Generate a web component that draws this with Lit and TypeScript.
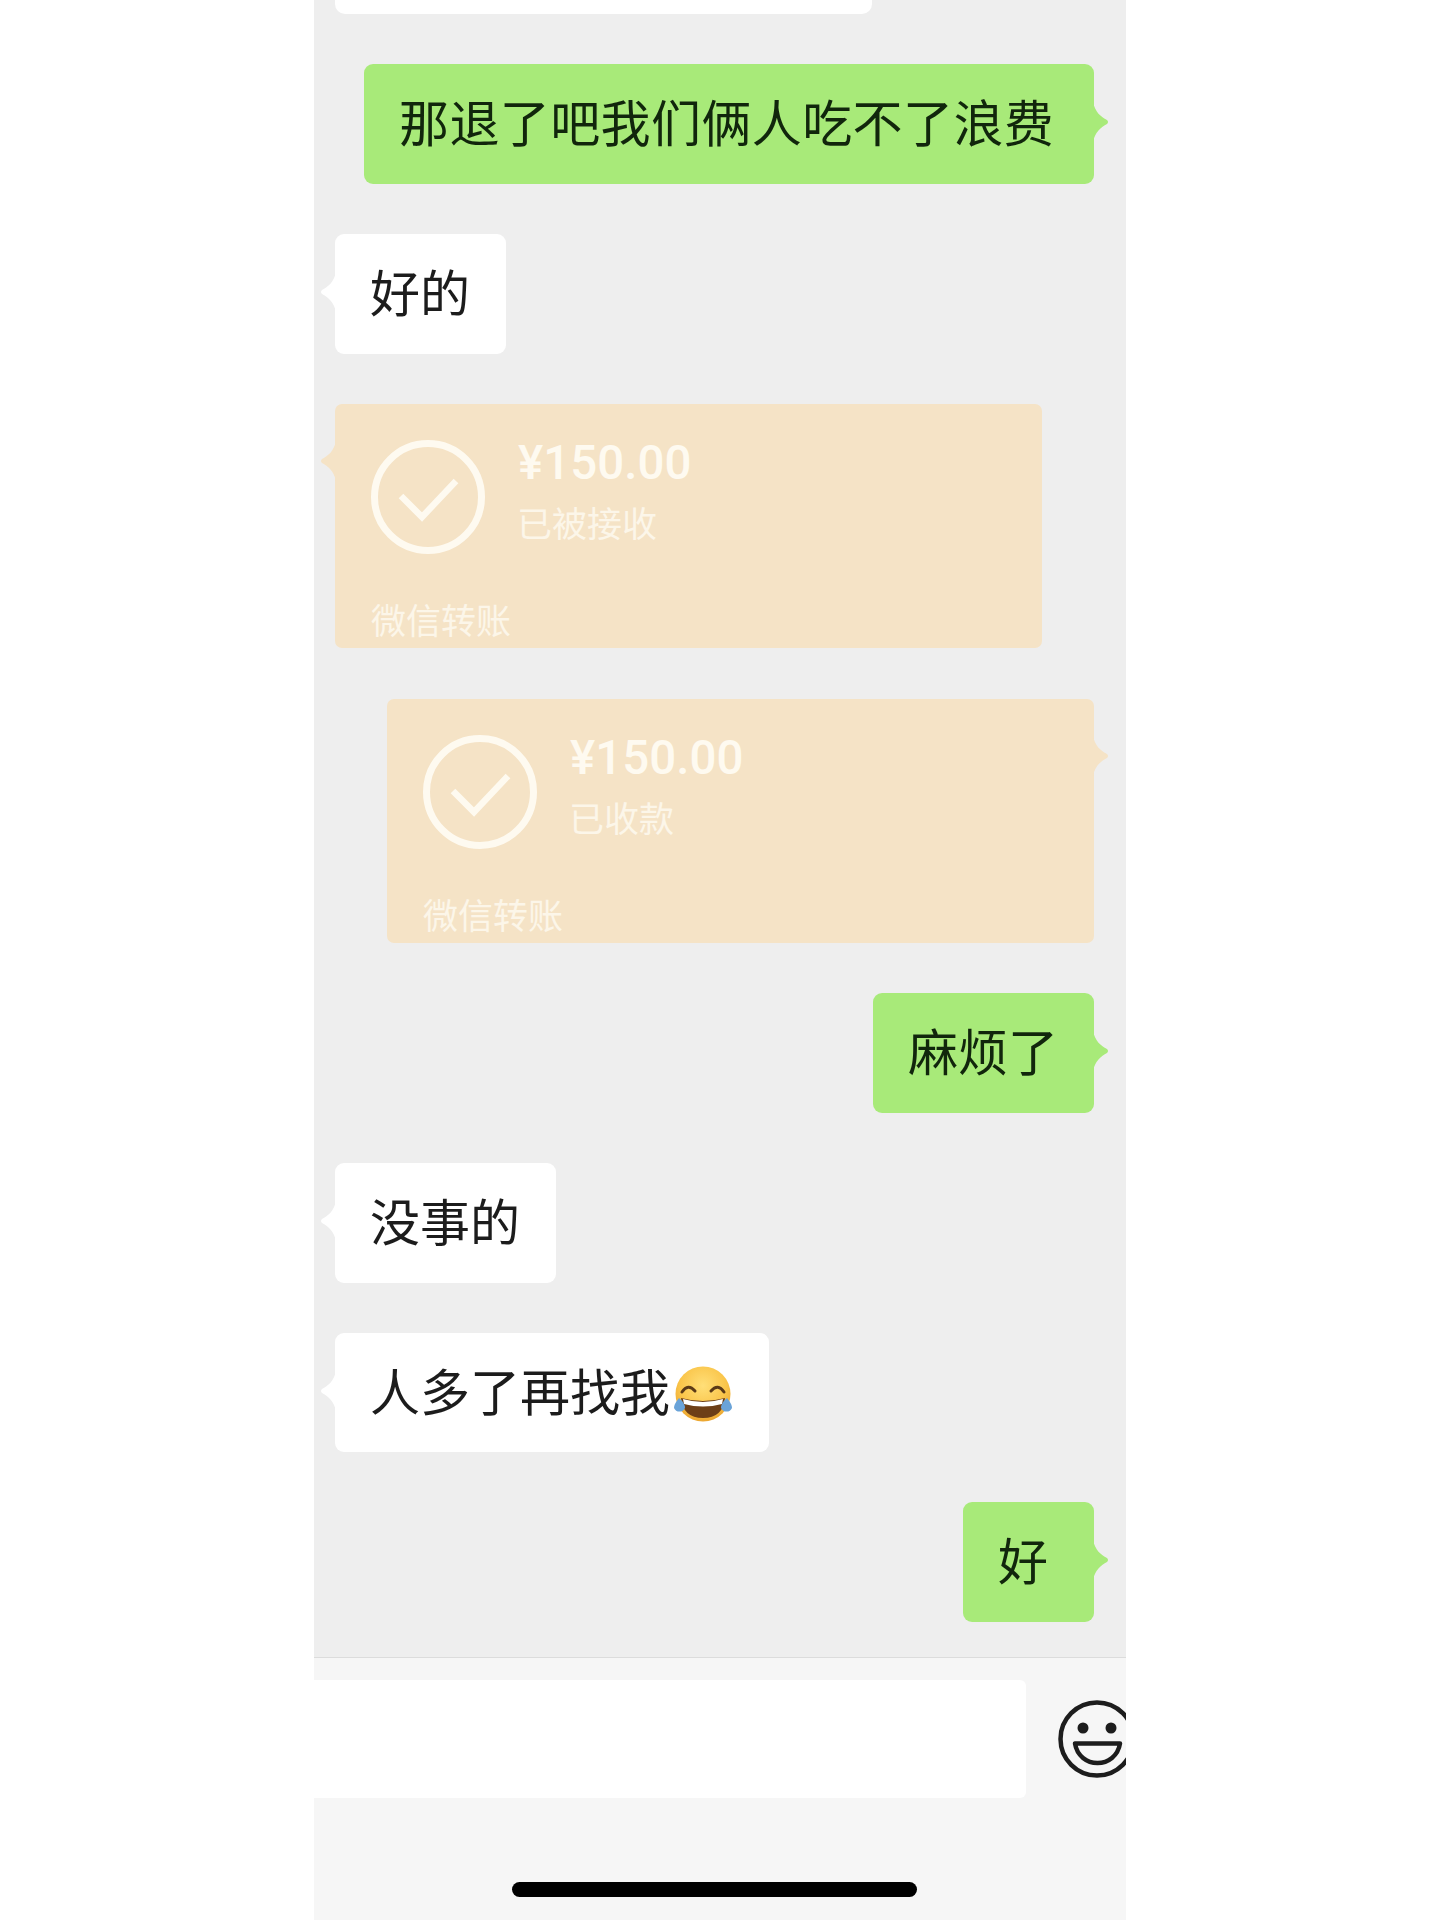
import { LitElement, html, css, svg } from "lit";
import { customElement } from "lit/decorators.js";

type Msg =
  | { kind: "text"; side: "in" | "out"; text: string; wide?: string; emoji?: boolean }
  | { kind: "card"; side: "in" | "out"; status: string };

const MESSAGES: Msg[] = [
  { kind: "text", side: "out", text: "那退了吧我们俩人吃不了浪费", wide: "w730" },
  { kind: "text", side: "in", text: "好的" },
  { kind: "card", side: "in", status: "已被接收" },
  { kind: "card", side: "out", status: "已收款" },
  { kind: "text", side: "out", text: "麻烦了" },
  { kind: "text", side: "in", text: "没事的" },
  { kind: "text", side: "in", text: "人多了再找我", emoji: true },
  { kind: "text", side: "out", text: "好", wide: "w131" },
];

const laughEmoji = svg`
  <defs>
    <radialGradient id="face" cx="50%" cy="35%" r="70%">
      <stop offset="0%" stop-color="#ffdf78" />
      <stop offset="60%" stop-color="#fac54a" />
      <stop offset="100%" stop-color="#e89f2a" />
    </radialGradient>
  </defs>
  <circle cx="30" cy="28" r="27.5" fill="url(#face)" />
  <path d="M9 26 Q15 17 22 25" fill="none" stroke="#5b3a17" stroke-width="3" stroke-linecap="round" />
  <path d="M38 25 Q45 17 51 26" fill="none" stroke="#5b3a17" stroke-width="3" stroke-linecap="round" />
  <path d="M8 32 Q30 38 52 32 Q50 52 30 52 Q10 52 8 32 Z" fill="#6d3f17" />
  <path d="M10 33 Q30 39 50 33 L49 38 Q30 43 11 38 Z" fill="#fff" />
  <path d="M6 32 Q1 38 1 42 A6 6 0 0 0 12 42 Q12 37 6 32 Z" fill="#6aa3d8" />
  <path d="M54 32 Q59 38 59 42 A6 6 0 0 1 48 42 Q48 37 54 32 Z" fill="#6aa3d8" />
`;

@customElement("app-root")
export class AppRoot extends LitElement {
  static styles = css`
    :host {
      display: block;
      width: 1440px;
      height: 1920px;
      background: #fff;
      font-family: "Noto Sans CJK SC", "Liberation Sans", sans-serif;
    }
    .phone {
      width: 812px;
      height: 1920px;
      margin: 0 auto;
      display: flex;
      flex-direction: column;
      overflow: hidden;
      background: #eeeeee;
    }
    .chat {
      height: 1657px;
      flex: none;
      padding: 0 32px 0 21px;
      box-sizing: border-box;
      display: flex;
      flex-direction: column;
      gap: 50px;
    }
    .stub {
      width: 537px;
      height: 14px;
      flex: none;
      background: #fff;
      border-radius: 0 0 10px 10px;
    }
    .bubble {
      position: relative;
      flex: none;
      height: 120px;
      box-sizing: border-box;
      padding: 0 36px 8px 35px;
      border-radius: 9px;
      font-size: 50px;
      line-height: 70px;
      white-space: nowrap;
      display: flex;
      align-items: center;
    }
    .w730 { width: 730px; letter-spacing: 0.4px; }
    .w131 { width: 131px; }
    .has-emoji { height: 119px; }
    .in { align-self: flex-start; }
    .out { align-self: flex-end; }
    .bubble.in { background: #fff; color: #1c1c1c; }
    .bubble.out { background: #a8ea79; color: #11260c; }
    .bubble::after,
    .card::after {
      content: "";
      position: absolute;
      top: 38px;
      width: 16px;
      height: 40px;
      background: inherit;
      clip-path: path("M0 0 C2 10 8 15 14 18 Q16 20 14 22 C8 25 2 30 0 40 Z");
    }
    .bubble.in::after,
    .card.in::after { left: -15px; transform: scaleX(-1); }
    .bubble.out::after,
    .card.out::after { right: -15px; }
    .emoji {
      width: 60px;
      height: 60px;
      flex: none;
      margin: 14px 0 0 3px;
    }
    .card {
      position: relative;
      flex: none;
      width: 707px;
      height: 244px;
      box-sizing: border-box;
      padding: 36px 36px 0 36px;
      background: #f5e3c6;
      border-radius: 7px;
      color: #fcf6e9;
      display: flex;
      flex-direction: column;
    }
    .card.in { margin-bottom: 1px; }
    .card::after { top: 37px; }
    .card-main {
      display: flex;
      gap: 33px;
    }
    .check {
      width: 114px;
      height: 114px;
      flex: none;
    }
    .amount-col {
      display: flex;
      flex-direction: column;
    }
    .amount {
      font-family: Roboto, "Liberation Sans", sans-serif;
      font-weight: 500;
      font-size: 47.5px;
      line-height: 52px;
      margin-top: -3px;
      color: #fefaf0;
    }
    .status {
      font-size: 35px;
      line-height: 52px;
      margin: 7px 0 0 -1px;
    }
    .card-foot {
      font-size: 35px;
      line-height: 52px;
      margin-top: 39px;
    }
    .bar {
      flex: 1;
      background: #f6f6f6;
      border-top: 1px solid #dcdcdc;
      box-sizing: border-box;
      padding-top: 22px;
      display: flex;
      flex-direction: column;
      overflow: hidden;
    }
    .input-row {
      display: flex;
      align-items: center;
      gap: 32px;
    }
    .input {
      width: 712px;
      height: 118px;
      flex: none;
      background: #fff;
      border-radius: 0 6px 6px 0;
    }
    .smile {
      width: 78px;
      height: 78px;
      flex: none;
    }
    .home {
      width: 405px;
      height: 15px;
      margin: 84px 0 0 198px;
      background: #000;
      border-radius: 8px;
    }
  `;

  private renderMessage(m: Msg) {
    if (m.kind === "card") {
      return html`<div class="card ${m.side}">
        <div class="card-main">
          <svg class="check" viewBox="0 0 114 114" fill="none" stroke="#fefaf0">
            <circle cx="57" cy="57" r="53.5" stroke-width="7" />
            <path d="M30 56 L51 77 L85 41" stroke-width="6.5" />
          </svg>
          <div class="amount-col">
            <div class="amount">¥150.00</div>
            <div class="status">${m.status}</div>
          </div>
        </div>
        <div class="card-foot">微信转账</div>
      </div>`;
    }
    return html`<div class="bubble ${m.side} ${m.wide ?? ""} ${m.emoji ? "has-emoji" : ""}">
      <span>${m.text}</span>
      ${m.emoji ? html`<svg class="emoji" viewBox="0 0 60 60">${laughEmoji}</svg>` : ""}
    </div>`;
  }

  render() {
    return html`<div class="phone">
      <div class="chat">
        <div class="stub"></div>
        ${MESSAGES.map((m) => this.renderMessage(m))}
      </div>
      <div class="bar">
        <div class="input-row">
          <div class="input"></div>
          <svg class="smile" viewBox="0 0 78 78" fill="none" stroke="#1d1d1d">
            <circle cx="39" cy="39" r="36.5" stroke-width="4.5" />
            <circle cx="25" cy="28" r="5.5" fill="#1d1d1d" stroke="none" />
            <circle cx="53" cy="28" r="5.5" fill="#1d1d1d" stroke="none" />
            <path d="M17 43.5 H62 C60 56 50 63 39.5 63 C29 63 19 56 17 43.5 Z" stroke-width="4.5" stroke-linejoin="round" />
          </svg>
        </div>
        <div class="home"></div>
      </div>
    </div>`;
  }
}
